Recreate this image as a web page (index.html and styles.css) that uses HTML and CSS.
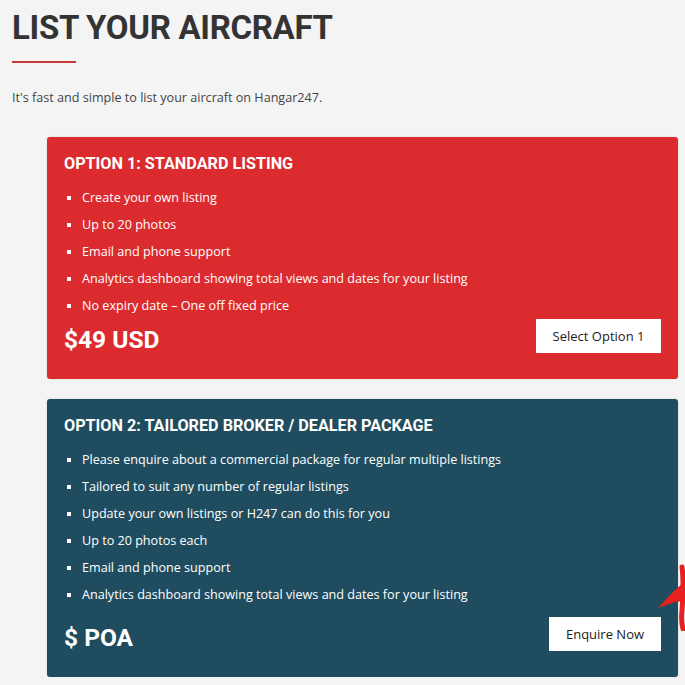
FILE: index.html
```html
<!DOCTYPE html>
<html lang="en">
<head>
    <meta charset="UTF-8">
    <meta name="viewport" content="width=device-width, initial-scale=1.0">
    <title>List Your Aircraft</title>
    <link rel="stylesheet" href="styles.css">
</head>
<body>
    <h1 class="page-title">LIST YOUR AIRCRAFT</h1>
    <div class="title-line"></div>
    <p class="intro">It's fast and simple to list your aircraft on Hangar247.</p>

    <div class="options">
        <div class="option option-red">
            <h2 class="option-title">OPTION 1: STANDARD LISTING</h2>
            <ul class="option-list">
                <li>Create your own listing</li>
                <li>Up to 20 photos</li>
                <li>Email and phone support</li>
                <li>Analytics dashboard showing total views and dates for your listing</li>
                <li>No expiry date &ndash; One off fixed price</li>
            </ul>
            <div class="option-footer">
                <div class="price">$49 USD</div>
                <a href="#" class="btn">Select Option 1</a>
            </div>
        </div>

        <div class="option option-blue">
            <h2 class="option-title">OPTION 2: TAILORED BROKER / DEALER PACKAGE</h2>
            <ul class="option-list">
                <li>Please enquire about a commercial package for regular multiple listings</li>
                <li>Tailored to suit any number of regular listings</li>
                <li>Update your own listings or H247 can do this for you</li>
                <li>Up to 20 photos each</li>
                <li>Email and phone support</li>
                <li>Analytics dashboard showing total views and dates for your listing</li>
            </ul>
            <div class="option-footer">
                <div class="price">$ POA</div>
                <a href="#" class="btn btn-wide">Enquire Now</a>
            </div>
            <!-- red marker scribble from the screenshot -->
            <svg class="scribble" width="30" height="70" viewBox="0 0 30 70">
                <path d="M3 47 L18 31 L30 20 L30 40 L20 41 Z" fill="#e8201f"/>
                <path d="M27 6 C29 20 28 34 27 50 C26 58 27 64 28 68" stroke="#e8201f" stroke-width="5" fill="none" stroke-linecap="round"/>
            </svg>
        </div>
    </div>
</body>
</html>
```

FILE: styles.css
```css
body {
    font-family: "Open Sans", "Liberation Sans", sans-serif;
    background-color: #f4f4f4;
    color: #444;
    margin: 0;
    padding: 7px 7px 0 12px;
    overflow: hidden;
}
.page-title {
    font-family: Roboto, "Liberation Sans", sans-serif;
    font-weight: 700;
    font-size: 33px;
    letter-spacing: -0.3px;
    line-height: 42px;
    color: #333;
    margin: 0;
}
.title-line {
    width: 64px;
    height: 2px;
    background-color: #c8393a;
    margin-top: 12px;
}
.intro {
    font-size: 12.6px;
    line-height: 20px;
    margin: 25px 0 0;
    color: #444;
}
.options {
    margin: 29px 0 0 35px;
    display: flex;
    flex-direction: column;
    gap: 20px;
}
.option {
    position: relative;
    color: #fff;
    border-radius: 3px;
    padding: 17px 17px 22px;
    box-shadow: 0 0 2px rgba(0, 0, 0, 0.15);
}
.option-red { background-color: #dc2b2e; }
.option-blue { background-color: #1f4d5f; }
.option-title {
    font-family: Roboto, "Liberation Sans", sans-serif;
    font-weight: 700;
    font-size: 16.2px;
    line-height: 20px;
    margin: 0;
}
.option-list {
    list-style: square;
    margin: 10px 0 0;
    padding: 0 0 0 18px;
    font-size: 12.6px;
    line-height: 27px;
}
.option-footer {
    display: flex;
    justify-content: space-between;
    align-items: flex-start;
    margin-top: 0;
}
.option-blue .option-footer { margin-top: 9px; }
.price {
    font-family: Roboto, "Liberation Sans", sans-serif;
    font-weight: 700;
    font-size: 24.5px;
    line-height: 34px;
    padding-top: 4px;
}
.btn {
    display: block;
    background-color: #fff;
    color: #222;
    text-decoration: none;
    font-size: 13px;
    line-height: 34px;
    width: 125px;
    text-align: center;
}
.btn-wide { width: 112px; }
.scribble {
    position: absolute;
    right: -7px;
    top: 162px;
}
```
